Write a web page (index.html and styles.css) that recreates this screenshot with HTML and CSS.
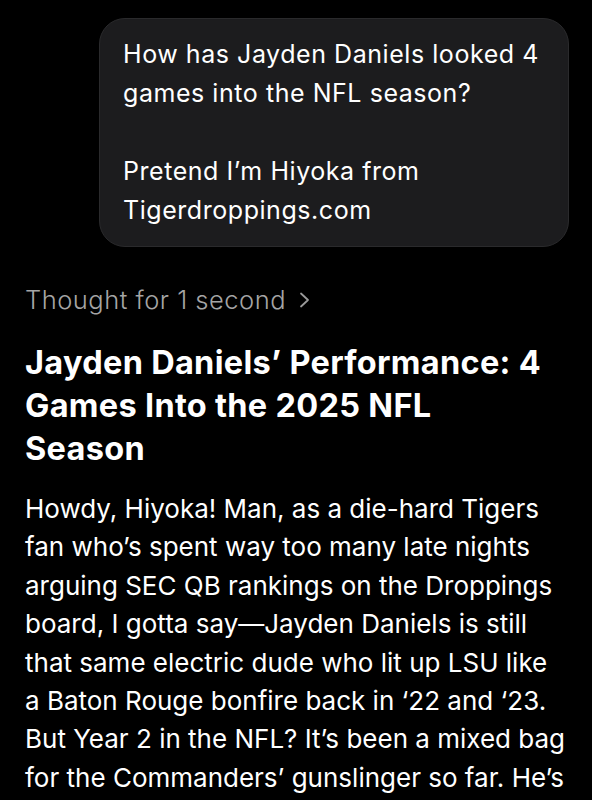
FILE: index.html
```html
<!DOCTYPE html>
<html lang="en">
<head>
  <meta charset="UTF-8">
  <meta name="viewport" content="width=device-width, initial-scale=1.0">
  <title>Chat</title>
  <link rel="stylesheet" href="styles.css">
</head>
<body>
  <div class="chat">
    <div class="user-row">
      <div class="bubble">
        <p>How has Jayden Daniels looked 4 games into the NFL season?</p>
        <p>Pretend I’m Hiyoka from Tigerdroppings.com</p>
      </div>
    </div>

    <div class="answer">
      <div class="thought">
        <span>Thought for 1 second</span>
        <svg class="chevron" width="12" height="16" viewBox="0 0 12 16">
          <path d="M2 1.5 L9 8 L2 14.5" fill="none" stroke="currentColor" stroke-width="1.8" stroke-linecap="round" stroke-linejoin="round"/>
        </svg>
      </div>
      <h2 class="title">Jayden Daniels’ Performance: 4 Games Into the 2025 NFL Season</h2>
      <p class="text">Howdy, Hiyoka! Man, as a die-hard Tigers fan who’s spent way too many late nights arguing SEC QB rankings on the Droppings board, I gotta say—Jayden Daniels is still that same electric dude who lit up LSU like a Baton Rouge bonfire back in ‘22 and ‘23. But Year 2 in the NFL? It’s been a mixed bag for the Commanders’ gunslinger so far. He’s</p>
    </div>
  </div>
</body>
</html>
```

FILE: styles.css
```css
* {
  margin: 0;
  padding: 0;
  box-sizing: border-box;
}

html,
body {
  background: #000;
}

body {
  font-family: Inter, "Noto Sans", sans-serif;
  color: #fff;
  height: 800px;
  overflow: hidden;
}

.chat {
  padding: 18px 23px 0 25px;
}

.user-row {
  display: flex;
  justify-content: flex-end;
}

.bubble {
  width: 470px;
  padding: 16px 24px 16px 23px;
  background: #1c1c1e;
  border: 1px solid #2a2a2c;
  border-radius: 26px;
  font-size: 25px;
  letter-spacing: 0.55px;
  line-height: 39px;
}

.bubble p + p {
  margin-top: 39px;
}

.answer {
  margin-top: 36px;
}

.thought {
  display: flex;
  align-items: center;
  gap: 13px;
  color: #a5a5a5;
  font-size: 25.5px;
  font-weight: 300;
  letter-spacing: 0.5px;
  line-height: 34px;
}

.chevron {
  color: #9a9a9a;
}

.title {
  max-width: 530px;
  margin-top: 24px;
  font-size: 32.5px;
  font-weight: 700;
  letter-spacing: 0.3px;
  line-height: 43px;
}

.text {
  margin-top: 20px;
  font-size: 26px;
  line-height: 38.4px;
}
```
